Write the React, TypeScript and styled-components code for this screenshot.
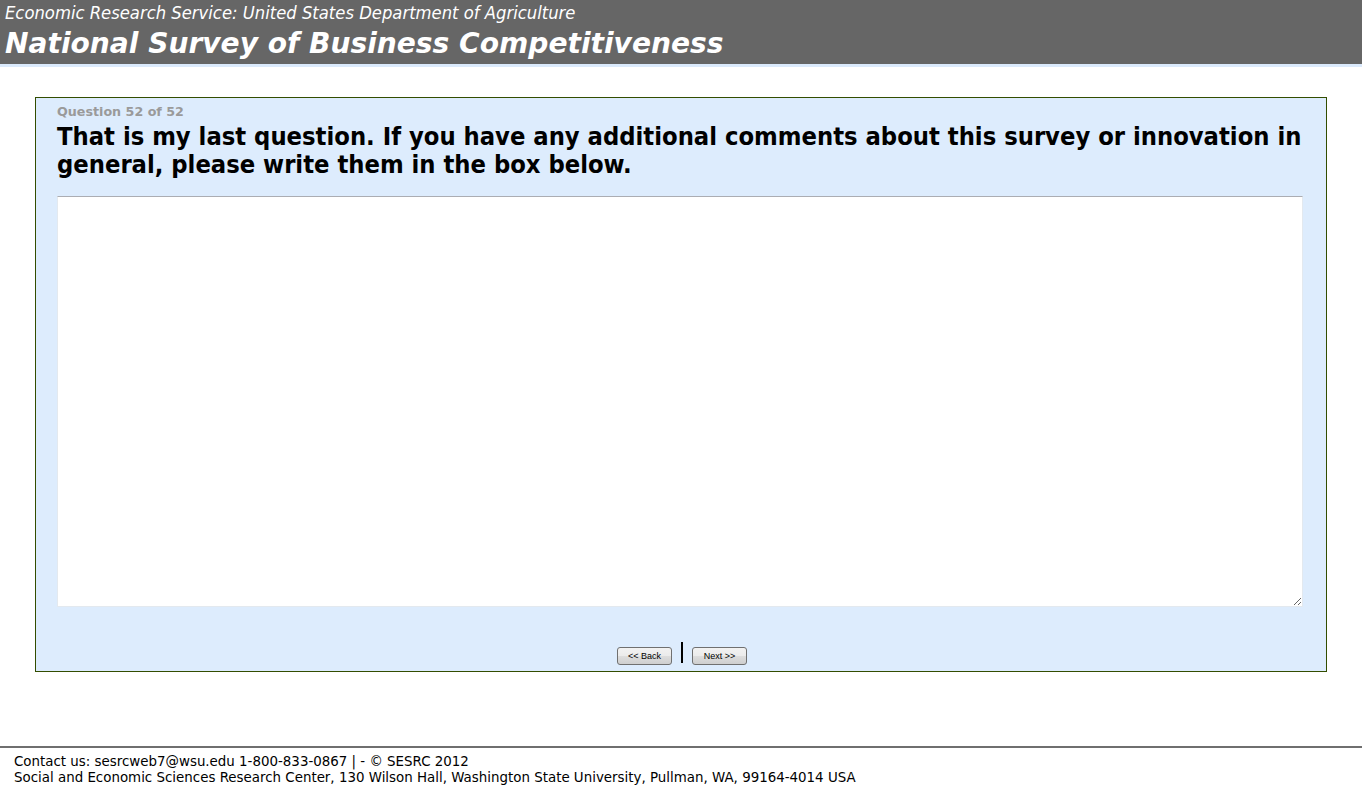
import React, { FC } from "react";
import styled, { createGlobalStyle } from "styled-components";

const GlobalStyle = createGlobalStyle`
  html, body {
    margin: 0;
    padding: 0;
    background: #ffffff;
    font-family: "DejaVu Sans", Verdana, sans-serif;
  }
`;

const Page = styled.div`
  display: flex;
  flex-direction: column;
  min-height: 789px;
`;

const Header = styled.header`
  background: #666666;
  color: #ffffff;
  padding: 3px 0 0 5px;
  height: 61px;
  box-sizing: content-box;
  border-bottom: 3px solid #dbeafc;
`;

const Agency = styled.div`
  font-family: "DejaVu Sans Condensed", Tahoma, sans-serif;
  font-size: 18.25px;
  font-style: italic;
  line-height: 20px;
`;

const Title = styled.h1`
  margin: 0;
  font-family: "DejaVu Sans", Tahoma, sans-serif;
  font-size: 28.1px;
  font-weight: bold;
  font-style: italic;
  line-height: 42px;
`;

const Main = styled.main`
  flex: 1;
  padding: 30px 35px 0;
`;

const QuestionBox = styled.section`
  border: 1px solid #334d00;
  background: #ddecfd;
  padding: 6px 23px 6px 21px;
`;

const Counter = styled.div`
  font-family: "DejaVu Sans", Tahoma, sans-serif;
  font-size: 12.7px;
  font-weight: bold;
  color: #9a9a9a;
  line-height: 16px;
`;

const QuestionText = styled.h2`
  margin: 3px 0 17px;
  font-family: "DejaVu Sans Condensed", Tahoma, sans-serif;
  font-size: 25.3px;
  font-weight: bold;
  color: #000000;
  line-height: 28px;
`;

const Comments = styled.textarea`
  display: block;
  width: 100%;
  height: 411px;
  box-sizing: border-box;
  border: 1px solid #e3e9ef;
  border-top-color: #abadb3;
  background: #ffffff;
  resize: both;
  font-family: "DejaVu Sans", sans-serif;
  font-size: 13px;
  outline: none;
`;

const Nav = styled.div`
  display: flex;
  justify-content: center;
  align-items: flex-end;
  gap: 9px;
  margin-top: 35px;
  padding-left: 4px;
`;

const NavButton = styled.button`
  width: 55px;
  height: 18px;
  padding: 0;
  border: 1px solid #707070;
  border-radius: 3px;
  background: linear-gradient(#f2f2f2 0%, #ebebeb 50%, #dddddd 51%, #cfcfcf 100%);
  font-family: "Liberation Sans", Arial, sans-serif;
  font-size: 9px;
  color: #000000;
  line-height: 16px;
`;

const Divider = styled.span`
  width: 2px;
  height: 21px;
  background: #000000;
  margin-bottom: 2px;
`;

const Footer = styled.footer`
  border-top: 2px solid #6f6f6f;
  margin-top: 74px;
  padding: 6px 14px 4px;
  font-family: "DejaVu Sans", Verdana, sans-serif;
  font-size: 13.4px;
  line-height: 16px;
  color: #000000;
`;

const App: FC = () => (
  <Page>
    <GlobalStyle />
    <Header>
      <Agency>Economic Research Service: United States Department of Agriculture</Agency>
      <Title>National Survey of Business Competitiveness</Title>
    </Header>
    <Main>
      <QuestionBox>
        <Counter>Question 52 of 52</Counter>
        <QuestionText>
          That is my last question. If you have any additional comments about this survey or innovation in
          general, please write them in the box below.
        </QuestionText>
        <Comments aria-label="Comments" />
        <Nav>
          <NavButton type="button">&lt;&lt; Back</NavButton>
          <Divider />
          <NavButton type="button">Next &gt;&gt;</NavButton>
        </Nav>
      </QuestionBox>
    </Main>
    <Footer>
      <div>Contact us: sesrcweb7@wsu.edu 1-800-833-0867 | - © SESRC 2012</div>
      <div>Social and Economic Sciences Research Center, 130 Wilson Hall, Washington State University, Pullman, WA, 99164-4014 USA</div>
    </Footer>
  </Page>
);

export default App;
